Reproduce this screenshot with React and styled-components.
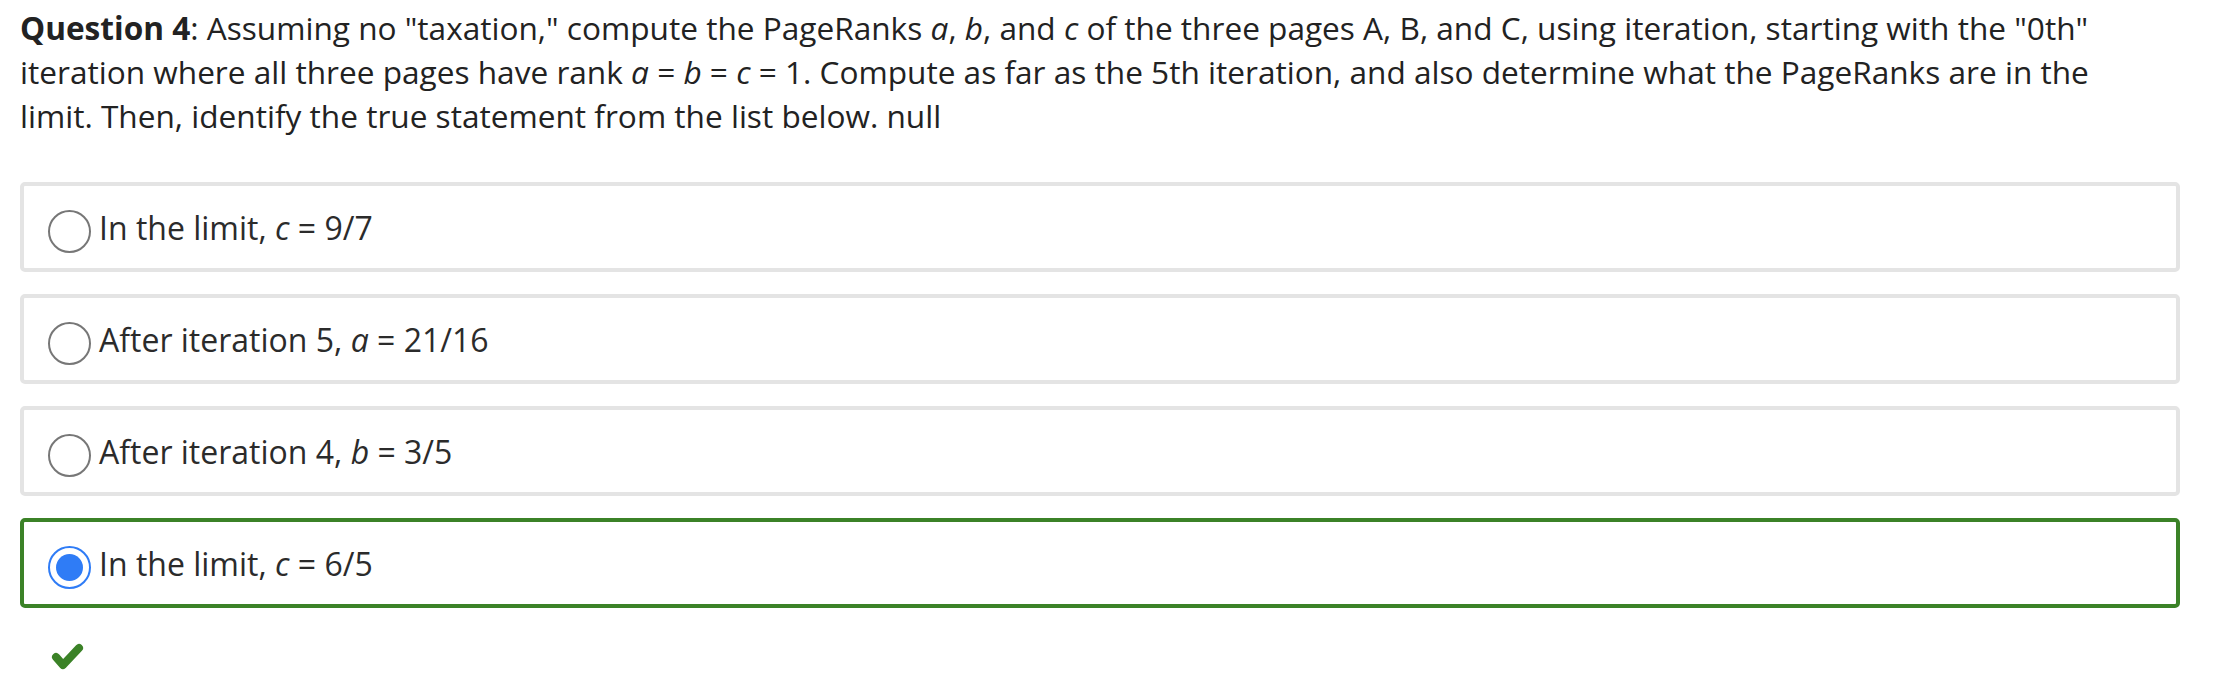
import React from "react";
import styled, { createGlobalStyle } from "styled-components";

const Global = createGlobalStyle`
  html, body { margin: 0; padding: 0; background: #fff; }
  body { font-family: "Open Sans", "Noto Sans", sans-serif; }
`;

const Page = styled.div`
  width: 2160px;
  padding: 6px 0 0 20px;
  box-sizing: content-box;
`;

const Question = styled.p`
  margin: 0 0 44px 0;
  padding-right: 44px;
  font-size: 31.6px;
  line-height: 44px;
  color: #222;
`;

const Strong = styled.b`
  font-weight: 700;
`;

const Var = styled.i`
  font-style: italic;
`;

const Options = styled.div`
  display: flex;
  flex-direction: column;
  gap: 22px;
`;

const Option = styled.div`
  display: flex;
  align-items: flex-start;
  height: 90px;
  box-sizing: border-box;
  border: 4px solid ${(p) => (p.$correct ? "#3b8227" : "#e4e4e4")};
  border-radius: 5px;
  padding: 20px 24px 0 24px;
  background: #fff;
`;

const Radio = styled.span`
  flex: 0 0 auto;
  width: 43px;
  height: 43px;
  margin-top: 4px;
  border-radius: 50%;
  box-sizing: border-box;
  border: 2px solid ${(p) => (p.$checked ? "#2f7cf6" : "#777")};
  display: flex;
  align-items: center;
  justify-content: center;
  &::after {
    content: "";
    display: ${(p) => (p.$checked ? "block" : "none")};
    width: 27px;
    height: 27px;
    border-radius: 50%;
    background: #2f7cf6;
  }
`;

const Label = styled.span`
  font-size: 32px;
  line-height: 44px;
  color: #2b2b2b;
  margin-left: 8px;
`;

const Feedback = styled.div`
  padding: 35px 0 0 31px;
  height: 40px;
`;

const options = [
  { pre: "In the limit, ", v: "c", post: " = 9/7" },
  { pre: "After iteration 5, ", v: "a", post: " = 21/16" },
  { pre: "After iteration 4, ", v: "b", post: " = 3/5" },
  { pre: "In the limit, ", v: "c", post: " = 6/5", checked: true },
];

export default function App() {
  return (
    <>
      <Global />
      <Page>
        <Question>
          <Strong>Question 4</Strong>: Assuming no "taxation," compute the PageRanks{" "}
          <Var>a</Var>, <Var>b</Var>, and <Var>c</Var> of the three pages A, B, and C, using
          iteration, starting with the "0th" iteration where all three pages have rank{" "}
          <Var>a</Var> = <Var>b</Var> = <Var>c</Var> = 1. Compute as far as the 5th iteration, and
          also determine what the PageRanks are in the limit. Then, identify the true statement
          from the list below. null
        </Question>
        <Options>
          {options.map((o, i) => (
            <Option key={i} $correct={o.checked}>
              <Radio $checked={o.checked} />
              <Label>
                {o.pre}
                <Var>{o.v}</Var>
                {o.post}
              </Label>
            </Option>
          ))}
        </Options>
        <Feedback>
          <svg width="34" height="28" viewBox="0 0 34 28">
            <polyline
              points="5,14 12,22 28,5"
              fill="none"
              stroke="#3b8227"
              strokeWidth="8"
              strokeLinecap="round"
              strokeLinejoin="round"
            />
          </svg>
        </Feedback>
      </Page>
    </>
  );
}
